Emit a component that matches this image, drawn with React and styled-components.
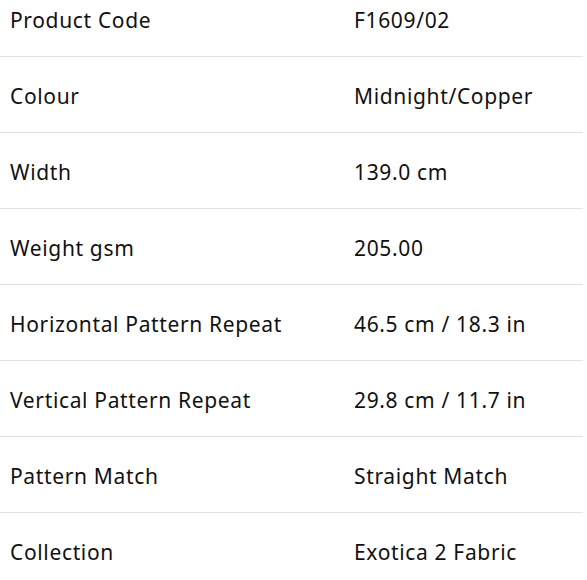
import React from 'react';
import styled, { createGlobalStyle } from 'styled-components';

const rows = [
  ['Product Code', 'F1609/02'],
  ['Colour', 'Midnight/Copper'],
  ['Width', '139.0 cm'],
  ['Weight gsm', '205.00'],
  ['Horizontal Pattern Repeat', '46.5 cm / 18.3 in'],
  ['Vertical Pattern Repeat', '29.8 cm / 11.7 in'],
  ['Pattern Match', 'Straight Match'],
  ['Collection', 'Exotica 2 Fabric'],
];

const App = () => {
  return (
    <>
      <GlobalStyle />
      <Table>
        {rows.map(([label, value], i) => (
          <Row key={label} last={i === rows.length - 1}>
            <Cell>{label}</Cell>
            <Cell>{value}</Cell>
          </Row>
        ))}
      </Table>
    </>
  );
};

export default App;

const GlobalStyle = createGlobalStyle`
body {
  margin: 0;
  background: #fff;
  overflow: hidden;
}
`;

const Table = styled.div`
width: 583px;
display: flex;
flex-direction: column;
margin-top: -19px;
font-family: "Noto Sans", sans-serif;
color: #111;
`;

const Row = styled.div`
display: grid;
grid-template-columns: 344px 1fr;
align-items: center;
padding-top: 5px;
box-sizing: border-box;
border-bottom: ${(p) => (p.last ? 'none' : '1px solid #e1e1e1')};
height: ${(p) => (p.last ? '75px' : '76px')};
`;

const Cell = styled.div`
font-size: 21px;
letter-spacing: 0.65px;
padding-left: 10px;
line-height: 1.2;
`;
